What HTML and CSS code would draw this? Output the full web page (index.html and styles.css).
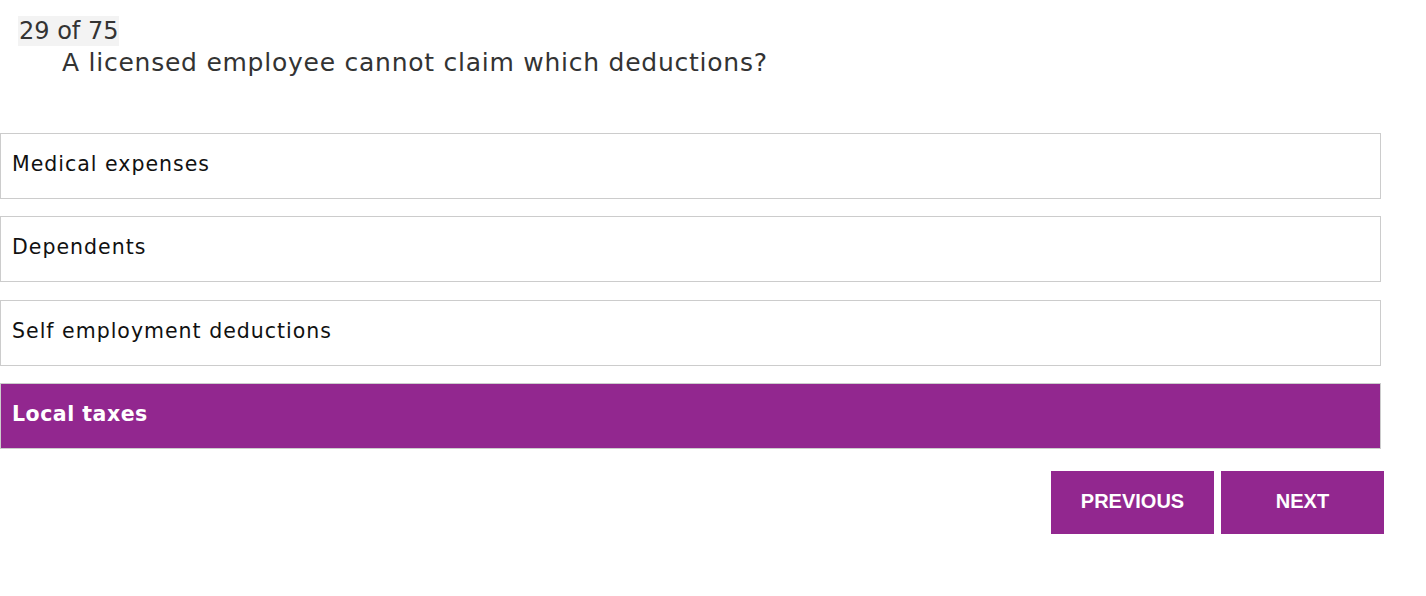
FILE: index.html
```
<!DOCTYPE html>
<html>
<head>
<meta charset="utf-8">
<link rel="stylesheet" href="styles.css">
</head>
<body>
<div class="quiz">
  <div class="head">
    <span class="counter">29 of 75</span>
    <div class="question">A licensed employee cannot claim which deductions?</div>
  </div>
  <div class="options">
    <div class="option">Medical expenses</div>
    <div class="option">Dependents</div>
    <div class="option">Self employment deductions</div>
    <div class="option selected">Local taxes</div>
  </div>
  <div class="nav">
    <button class="btn">PREVIOUS</button>
    <button class="btn">NEXT</button>
  </div>
</div>
</body>
</html>
```
FILE: styles.css
```
html, body {
  margin: 0;
  padding: 0;
  background: #fff;
}
.quiz {
  width: 1384px;
  font-family: "DejaVu Sans", "Open Sans", sans-serif;
}
.head {
  padding: 16px 0 0 18px;
}
.counter {
  display: inline-block;
  background: #f3f3f3;
  color: #333;
  font-size: 24px;
  line-height: 29px;
  padding: 1px 1px 0 1px;
}
.question {
  color: #333;
  font-size: 25px;
  letter-spacing: 0.75px;
  line-height: 33px;
  padding-left: 44px;
}
.options {
  margin-top: 54px;
  display: flex;
  flex-direction: column;
  gap: 17.33px;
  width: 1381px;
}
.option {
  box-sizing: border-box;
  height: 66px;
  border: 1px solid #cccccc;
  padding: 0 11px;
  display: flex;
  align-items: center;
  padding-bottom: 4px;
  font-size: 20.5px;
  letter-spacing: 1px;
  color: #111;
}
.option.selected {
  background: #92278f;
  color: #fff;
  font-weight: 600;
  letter-spacing: 0.5px;
}
.nav {
  display: flex;
  justify-content: flex-end;
  gap: 7px;
  margin-top: 22px;
}
.btn {
  width: 163px;
  height: 63px;
  border: none;
  background: #92278f;
  color: #fff;
  font-family: "Liberation Sans", Arial, sans-serif;
  font-weight: bold;
  font-size: 20px;
  padding: 0 0 2px 0;
}
```
